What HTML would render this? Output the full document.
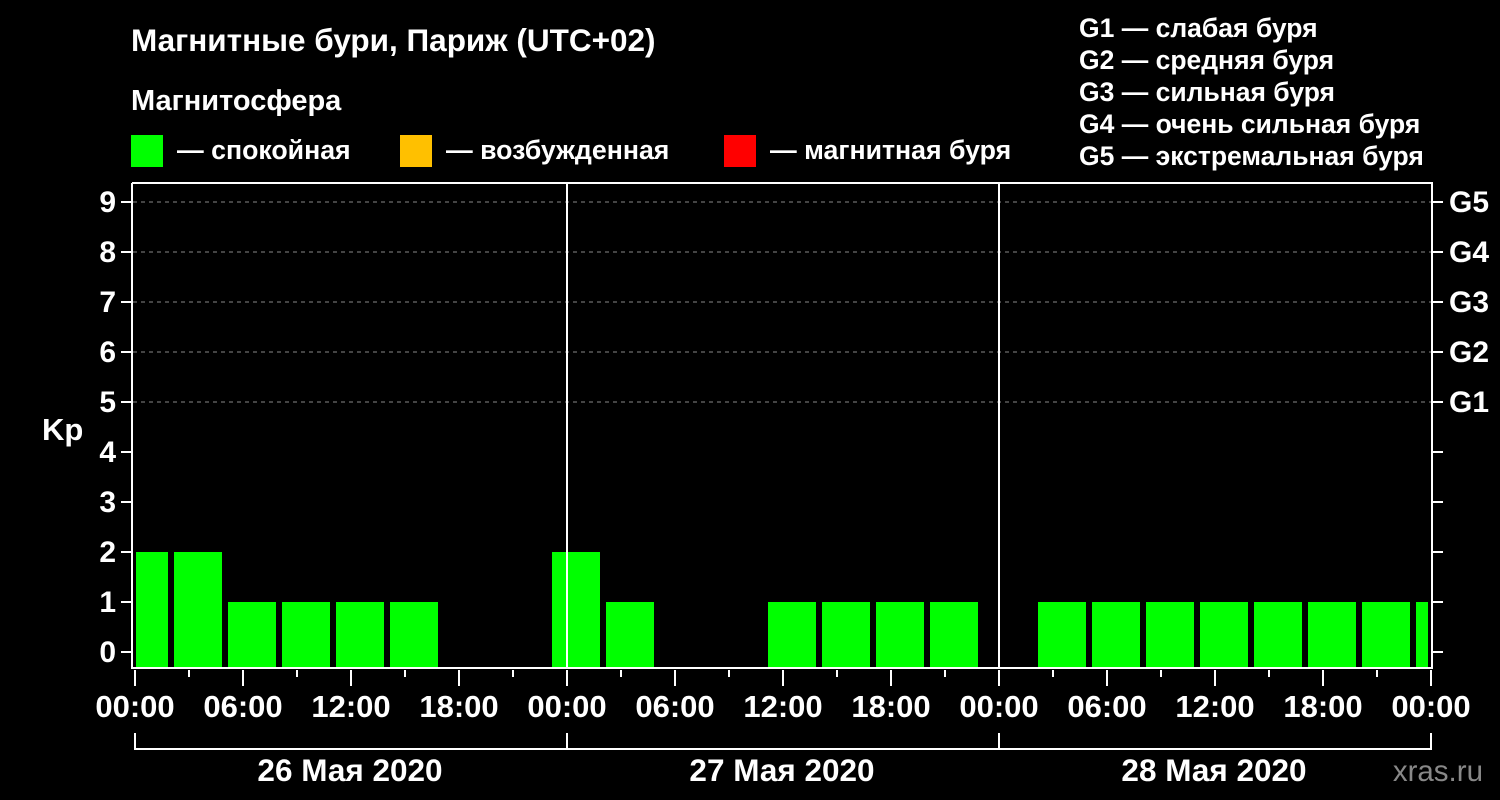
<!DOCTYPE html>
<html><head><meta charset="utf-8"><style>
html,body{margin:0;padding:0;background:#000;width:1500px;height:800px;overflow:hidden}
svg text{font-family:"Liberation Sans",Arial,sans-serif;font-weight:bold;fill:#fff}
</style></head><body>
<svg width="1500" height="800" viewBox="0 0 1500 800" xmlns="http://www.w3.org/2000/svg">
<rect width="1500" height="800" fill="#000"/>
<text x="131" y="51" font-size="31.5">Магнитные бури, Париж (UTC+02)</text>
<text x="131" y="110" font-size="29">Магнитосфера</text>
<rect x="131" y="135" width="32" height="32" fill="#00ff00"/>
<text x="177" y="159" font-size="26.7">— спокойная</text>
<rect x="400" y="135" width="32" height="32" fill="#ffc000"/>
<text x="446" y="159" font-size="26.7">— возбужденная</text>
<rect x="724" y="135" width="32" height="32" fill="#ff0000"/>
<text x="770" y="159" font-size="26.7">— магнитная буря</text>
<g font-size="26.5">
<text x="1079" y="37">G1 — слабая буря</text>
<text x="1079" y="69">G2 — средняя буря</text>
<text x="1079" y="101">G3 — сильная буря</text>
<text x="1079" y="133">G4 — очень сильная буря</text>
<text x="1079" y="165">G5 — экстремальная буря</text>
</g>
<g stroke="#888" stroke-width="1" stroke-dasharray="4,4">
<line x1="133" y1="202" x2="1432" y2="202"/><line x1="133" y1="252" x2="1432" y2="252"/>
<line x1="133" y1="302" x2="1432" y2="302"/><line x1="133" y1="352" x2="1432" y2="352"/>
<line x1="133" y1="402" x2="1432" y2="402"/>
</g>
<g fill="#00ff00">
<rect x="136" y="552" width="32" height="116"/>
<rect x="174" y="552" width="48" height="116"/>
<rect x="228" y="602" width="48" height="66"/>
<rect x="282" y="602" width="48" height="66"/>
<rect x="336" y="602" width="48" height="66"/>
<rect x="390" y="602" width="48" height="66"/>
<rect x="552" y="552" width="48" height="116"/>
<rect x="606" y="602" width="48" height="66"/>
<rect x="768" y="602" width="48" height="66"/>
<rect x="822" y="602" width="48" height="66"/>
<rect x="876" y="602" width="48" height="66"/>
<rect x="930" y="602" width="48" height="66"/>
<rect x="1038" y="602" width="48" height="66"/>
<rect x="1092" y="602" width="48" height="66"/>
<rect x="1146" y="602" width="48" height="66"/>
<rect x="1200" y="602" width="48" height="66"/>
<rect x="1254" y="602" width="48" height="66"/>
<rect x="1308" y="602" width="48" height="66"/>
<rect x="1362" y="602" width="48" height="66"/>
<rect x="1416" y="602" width="12" height="66"/>
</g>
<g stroke="#fff" stroke-width="2" fill="none">
<polyline points="132,183 1432,183 1432,668 132,668 132,183"/>
<line x1="567" y1="183" x2="567" y2="668"/>
<line x1="999" y1="183" x2="999" y2="668"/>
<path d="M121 202H132M121 252H132M121 302H132M121 352H132M121 402H132M121 452H132M121 502H132M121 552H132M121 602H132M121 652H132"/>
<path d="M1432 202H1443M1432 252H1443M1432 302H1443M1432 352H1443M1432 402H1443M1432 452H1443M1432 502H1443M1432 552H1443M1432 602H1443M1432 652H1443"/>
<path d="M135 670V686M243 670V686M351 670V686M459 670V686M567 670V686M675 670V686M783 670V686M891 670V686M999 670V686M1107 670V686M1215 670V686M1323 670V686M1431 670V686"/>
<path d="M189 670V677M297 670V677M405 670V677M513 670V677M621 670V677M729 670V677M837 670V677M945 670V677M1053 670V677M1161 670V677M1269 670V677M1377 670V677"/>
<path d="M135 733V749H1431V733M567 733V749M999 733V749"/>
</g>
<g font-size="30" text-anchor="end">
<text x="116" y="212">9</text><text x="116" y="262">8</text><text x="116" y="312">7</text>
<text x="116" y="362">6</text><text x="116" y="412">5</text><text x="116" y="462">4</text>
<text x="116" y="512">3</text><text x="116" y="562">2</text><text x="116" y="612">1</text>
<text x="116" y="662">0</text>
</g>
<text x="42" y="440" font-size="31">Kp</text>
<g font-size="30">
<text x="1449" y="212">G5</text><text x="1449" y="262">G4</text><text x="1449" y="312">G3</text>
<text x="1449" y="362">G2</text><text x="1449" y="412">G1</text>
</g>
<g font-size="31" text-anchor="middle">
<text x="135" y="717">00:00</text><text x="243" y="717">06:00</text><text x="351" y="717">12:00</text>
<text x="459" y="717">18:00</text><text x="567" y="717">00:00</text><text x="675" y="717">06:00</text>
<text x="783" y="717">12:00</text><text x="891" y="717">18:00</text><text x="999" y="717">00:00</text>
<text x="1107" y="717">06:00</text><text x="1215" y="717">12:00</text><text x="1323" y="717">18:00</text>
<text x="1431" y="717">00:00</text>
</g>
<g font-size="31.5" text-anchor="middle">
<text x="350" y="781">26 Мая 2020</text>
<text x="782" y="781">27 Мая 2020</text>
<text x="1214" y="781">28 Мая 2020</text>
</g>
<text x="1483" y="781" font-size="29.5" text-anchor="end" style="fill:#888;font-weight:normal">xras.ru</text>
</svg>
</body></html>
